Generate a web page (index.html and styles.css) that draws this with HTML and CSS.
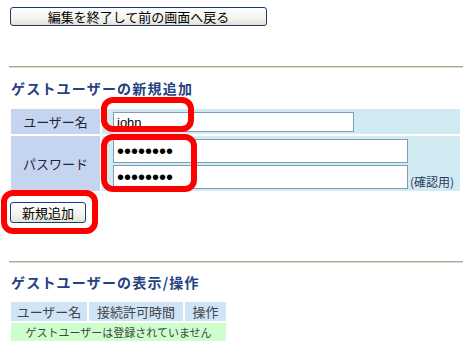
FILE: index.html
```html
<!DOCTYPE html>
<html lang="ja">
  <head>
    <meta charset="UTF-8" />
    <title>ゲストユーザー</title>
    <link rel="stylesheet" href="styles.css">
  </head>

  <body>
    <div class="page">
      <button class="xp-btn back-btn">編集を終了して前の画面へ戻る</button>

      <div class="rule"></div>
      <h2 class="heading">ゲストユーザーの新規追加</h2>

      <table class="add-table">
        <tr class="row-user">
          <th>ユーザー名</th>
          <td><input type="text" class="in-user" value="john"></td>
        </tr>
        <tr class="row-pass">
          <th>パスワード</th>
          <td>
            <input type="password" class="in-pass" value="password">
            <div class="confirm">
              <input type="password" class="in-pass" value="password">
              <span class="note">(確認用)</span>
            </div>
          </td>
        </tr>
      </table>

      <button class="xp-btn add-btn">新規追加</button>

      <div class="rule rule-second"></div>
      <h2 class="heading heading-second">ゲストユーザーの表示/操作</h2>

      <table class="list-table">
        <tr>
          <th class="col-name">ユーザー名</th>
          <th class="col-time">接続許可時間</th>
          <th class="col-op">操作</th>
        </tr>
        <tr>
          <td colspan="3" class="empty">ゲストユーザーは登録されていません</td>
        </tr>
      </table>

      <!-- red marks drawn over the form -->
      <div class="mark mark-user"></div>
      <div class="mark mark-pass"></div>
      <div class="mark mark-btn"></div>
    </div>
  </body>
</html>
```

FILE: styles.css
```css
body {
  margin: 0;
  background: #ffffff;
  font-family: "Noto Sans CJK JP", "DejaVu Sans", sans-serif;
  color: #222222;
}

.page {
  position: relative;
  padding: 7px 0 0 9px;
  height: 339px;
  overflow: hidden;
}

.xp-btn {
  display: block;
  box-sizing: border-box;
  margin: 0 0 0 1px;
  padding: 0;
  font-family: "Noto Sans CJK JP", sans-serif;
  font-size: 13px;
  line-height: 15px;
  color: #000000;
  background: linear-gradient(#ffffff, #f4f3ee 60%, #e3e1d6);
  border: 1px solid #1c3c6c;
  border-radius: 3px;
}

.back-btn {
  width: 257px;
  height: 19px;
}

.add-btn {
  width: 76px;
  height: 21px;
  margin-top: 9px;
}

.rule {
  margin-top: 40px;
  border-top: 1px solid #aca899;
  border-bottom: 1px solid #dcd8c8;
}

.rule-second {
  margin-top: 38px;
}

.heading {
  margin: 12px 0 0 2px;
  font-size: 14px;
  line-height: 16px;
  font-weight: bold;
  letter-spacing: 1.2px;
  color: #23427f;
}

.heading-second {
  margin-top: 11px;
}

.add-table {
  margin-top: 11px;
  width: 453px;
  border-spacing: 2px;
}

.add-table th {
  width: 89px;
  padding: 0;
  font-size: 13px;
  font-weight: normal;
  color: #1c2540;
  background: #c6d5ef;
  text-align: center;
}

.add-table td {
  padding: 3px 0 2px 11px;
  background: #d2ebf3;
  vertical-align: top;
}

.row-user td,
.row-user th {
  height: 25px;
  box-sizing: border-box;
}

.row-pass th {
  height: 55px;
}

input {
  display: block;
  box-sizing: border-box;
  margin: 0;
  padding: 0 3px;
  border: 1px solid #7f9db9;
  background: #ffffff;
  font-family: "Liberation Sans", "Noto Sans CJK JP", sans-serif;
  color: #000000;
}

.in-user {
  width: 241px;
  height: 20px;
  font-size: 13px;
}

.in-pass {
  width: 295px;
  height: 24px;
  font-size: 20px;
  letter-spacing: 0;
}

.confirm {
  display: flex;
  align-items: flex-end;
  margin-top: 2px;
}

.note {
  margin: 0 0 1px 2px;
  font-size: 12px;
  line-height: 13px;
  color: #2a3a5e;
}

.list-table {
  margin-top: 10px;
  border-spacing: 2px;
}

.list-table th {
  height: 19px;
  padding: 0;
  font-size: 13px;
  font-weight: normal;
  color: #444444;
  background: #d0e4f8;
  text-align: center;
}

.col-name {
  width: 76px;
}

.col-time {
  width: 94px;
}

.col-op {
  width: 41px;
}

.list-table .empty {
  height: 18px;
  padding: 0;
  font-size: 11px;
  color: #444444;
  background: #ccffcc;
  text-align: center;
}

.mark {
  position: absolute;
  box-sizing: border-box;
  border: 6px solid #ff0000;
  border-radius: 12px;
}

.mark-user {
  left: 101px;
  top: 97px;
  width: 93px;
  height: 35px;
}

.mark-pass {
  left: 101px;
  top: 134px;
  width: 96px;
  height: 58px;
}

.mark-btn {
  left: 1px;
  top: 190px;
  width: 97px;
  height: 44px;
}
```
